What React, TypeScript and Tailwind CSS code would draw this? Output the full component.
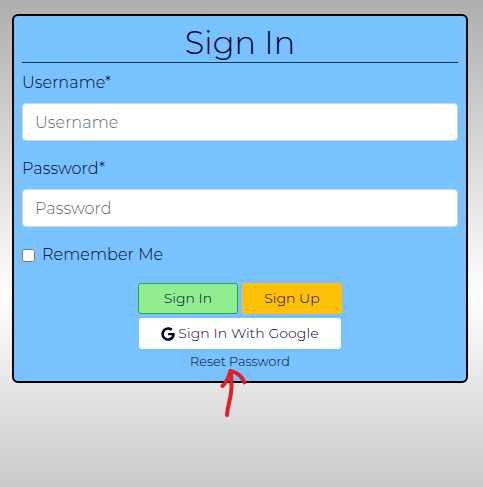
import { FaGoogle } from "react-icons/fa";

function Field({ label, type, placeholder }: { label: string; type: string; placeholder: string }) {
  return (
    <label className="block h-[86px]">
      <span className="flex h-6 items-center text-[16px] tracking-[0.08px]">{label}</span>
      <input
        type={type}
        placeholder={placeholder}
        className="mt-2 block h-[38px] w-full rounded border border-[#ced4da] bg-white px-3 text-[16px] font-light tracking-[0.08px] placeholder:text-[#616a72] placeholder:opacity-100"
      />
    </label>
  );
}

export default function App() {
  return (
    <main
      className="h-[487px] w-[483px] overflow-hidden bg-[linear-gradient(180deg,#aeaeae_0px,#ffffff_294px,#c9c9c9_487px)] px-3 pt-[14px] font-light text-[#020230]"
      style={{ fontFamily: 'Montserrat, Inter, "Liberation Sans", sans-serif' }}
    >
      <section className="relative h-[369px] w-[456px] rounded-[6px] border-2 border-black bg-[#77c2ff] px-2">
        <h1 className="flex h-[47px] items-center justify-center border-b border-[#183045] pt-[7px] text-[32px] leading-none">
          Sign In
        </h1>
        <form className="pt-[8px]">
          <Field label="Username*" type="text" placeholder="Username" />
          <Field label="Password*" type="password" placeholder="Password" />
          <label className="flex h-6 items-center text-[16px] tracking-[0.08px]">
            <input type="checkbox" className="mr-[7px] size-[13px]" />
            Remember Me
          </label>
          <div className="mt-4 flex justify-center gap-1">
            <button type="button" className="h-[31px] w-[100px] rounded-[3px] border border-[#28a745] bg-[#90ee90] text-[14px]">
              Sign In
            </button>
            <button type="button" className="h-[31px] w-[100px] rounded-[3px] bg-[#ffc107] text-[14px]">
              Sign Up
            </button>
          </div>
          <button type="button" className="mx-auto mt-1 flex h-[31px] w-[202px] items-center justify-center gap-[3px] rounded-[3px] bg-white text-[14px] tracking-[0.08px]">
            <FaGoogle className="size-[14px]" />
            <span>Sign In With Google</span>
          </button>
          <a className="mt-[3px] block text-center text-[12.8px] leading-5">Reset Password</a>
        </form>
        <svg className="absolute left-[206px] top-[351px] h-[52px] w-[30px]" viewBox="220 367 30 52" fill="none" stroke="#e02024" strokeWidth="4" strokeLinecap="round" strokeLinejoin="round">
          <path d="M227 415C228 402 232 397 231.500 384C231.500 379 231 374 230.500 371" />
          <path d="M222.500 386C226 383 229 376 230.500 371C236 372 242 376 244.500 382.500" />
        </svg>
      </section>
    </main>
  );
}
